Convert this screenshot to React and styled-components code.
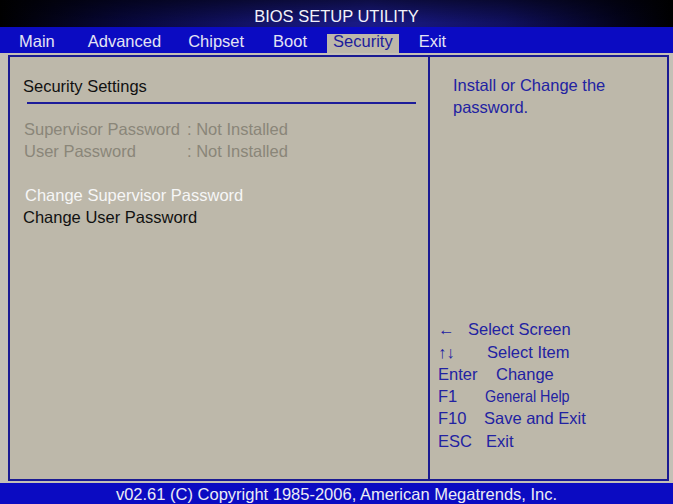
import React from "react";
import styled, { createGlobalStyle } from "styled-components";

const Global = createGlobalStyle`
  html, body { margin: 0; padding: 0; background: #c4c0b6; }
  body { font-family: "Liberation Sans", Arial, sans-serif; }
`;

const Screen = styled.div`
  width: 673px;
  height: 504px;
  display: flex;
  flex-direction: column;
  background: #c4c0b6;
  font-family: "Liberation Sans", Arial, sans-serif;
  font-size: 16.5px;
  overflow: hidden;
`;

const TitleBar = styled.div`
  height: 27px;
  box-sizing: border-box;
  padding-top: 6px;
  line-height: 21px;
  text-align: center;
  color: #f2f2fa;
  background:
    linear-gradient(to bottom, rgba(0,0,0,0.5), rgba(0,0,0,0) 85%),
    linear-gradient(to right, #000 0%, #07073a 18%, #14146e 40%, #1a1a88 55%, #10105e 75%, #03031c 92%, #000 100%);
`;

const MenuBar = styled.div`
  height: 26px;
  display: flex;
  align-items: flex-end;
  padding-left: 13px;
  background: #0b0bc2;
`;

const Tab = styled.div`
  margin-left: ${(p) => p.$gap}px;
  padding: 0 6px 4px;
  line-height: 15px;
  color: ${(p) => (p.$active ? "#1c1c9c" : "#e4e4f4")};
  background: ${(p) => (p.$active ? "#bdb8aa" : "transparent")};
`;

const Body = styled.div`
  flex: 1;
  padding: 2px 4px 2px 8px;
  display: flex;
`;

const MainBox = styled.div`
  flex: 1;
  display: grid;
  grid-template-columns: 418px 237px;
  border: 2px solid #1a1a92;
  background: #bdb8aa;
`;

const LeftPanel = styled.div`
  padding: 18px 12px 0 13px;
`;

const Heading = styled.div`
  line-height: 22px;
  color: #111;
`;

const Rule = styled.div`
  margin: 5px 0 0 4px;
  height: 2px;
  background: #1c1c9a;
`;

const StatusList = styled.div`
  margin-top: 14px;
  display: grid;
  grid-template-columns: 163px auto;
  line-height: 22px;
  color: #8a8679;
  padding-left: 1px;
`;

const ItemList = styled.div`
  margin-top: 23px;
  display: flex;
  flex-direction: column;
  line-height: 21.5px;
`;

const Item = styled.div`
  color: ${(p) => (p.$selected ? "#f6f6f6" : "#111")};
  padding-left: ${(p) => (p.$selected ? 2 : 0)}px;
`;

const RightPanel = styled.div`
  border-left: 2px solid #1a1a92;
  display: flex;
  flex-direction: column;
  justify-content: space-between;
  padding: 17px 18px 27px 23px;
  color: #2222a2;
`;

const HelpText = styled.div`
  line-height: 22px;
`;

const KeyList = styled.div`
  margin-left: -15px;
  line-height: 22.3px;
`;

const KeyRow = styled.div`
  display: flex;
  white-space: nowrap;
`;

const Key = styled.span`
  width: ${(p) => p.$w}px;
  flex: none;
`;

const Desc = styled.span`
  display: inline-block;
  transform: ${(p) => (p.$condensed ? "scaleX(0.87)" : "none")};
  transform-origin: left center;
`;

const Footer = styled.div`
  height: 21px;
  box-sizing: border-box;
  padding-top: 1px;
  line-height: 20px;
  text-align: center;
  color: #ececf4;
  background: #0b0bc2;
`;

const tabs = [
  { label: "Main", gap: 0 },
  { label: "Advanced", gap: 21 },
  { label: "Chipset", gap: 15 },
  { label: "Boot", gap: 17 },
  { label: "Security", gap: 14, active: true },
  { label: "Exit", gap: 14 },
];

const keys = [
  { k: "\u2190", d: "Select Screen", w: 30 },
  { k: "\u2191\u2193", d: "Select Item", w: 49 },
  { k: "Enter", d: "Change", w: 58 },
  { k: "F1", d: "General Help", w: 47, condensed: true },
  { k: "F10", d: "Save and Exit", w: 46 },
  { k: "ESC", d: "Exit", w: 48 },
];

export default function App() {
  return (
    <Screen>
      <Global />
      <TitleBar>BIOS SETUP UTILITY</TitleBar>
      <MenuBar>
        {tabs.map((t) => (
          <Tab key={t.label} $gap={t.gap} $active={t.active}>
            {t.label}
          </Tab>
        ))}
      </MenuBar>
      <Body>
        <MainBox>
          <LeftPanel>
            <Heading>Security Settings</Heading>
            <Rule />
            <StatusList>
              <span>Supervisor Password</span>
              <span>: Not Installed</span>
              <span>User Password</span>
              <span>: Not Installed</span>
            </StatusList>
            <ItemList>
              <Item $selected>Change Supervisor Password</Item>
              <Item>Change User Password</Item>
            </ItemList>
          </LeftPanel>
          <RightPanel>
            <HelpText>Install or Change the password.</HelpText>
            <KeyList>
              {keys.map((r) => (
                <KeyRow key={r.k}>
                  <Key $w={r.w}>{r.k}</Key>
                  <Desc $condensed={r.condensed}>{r.d}</Desc>
                </KeyRow>
              ))}
            </KeyList>
          </RightPanel>
        </MainBox>
      </Body>
      <Footer>v02.61 (C) Copyright 1985-2006, American Megatrends, Inc.</Footer>
    </Screen>
  );
}
